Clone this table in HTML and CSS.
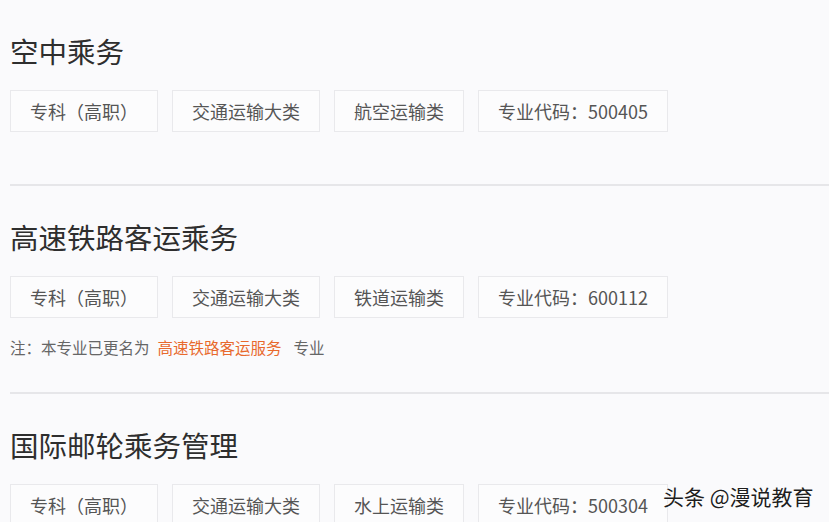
FILE: index.html
```html
<!DOCTYPE html>
<html lang="zh-CN">
<head>
  <meta charset="UTF-8">
  <title>专业介绍</title>
  <link rel="stylesheet" href="styles.css">
</head>
<body>
  <div class="major-list">
    <div class="major">
      <h2 class="major-title">空中乘务</h2>
      <div class="tags">
        <span class="tag">专科（高职）</span>
        <span class="tag">交通运输大类</span>
        <span class="tag">航空运输类</span>
        <span class="tag">专业代码：500405</span>
      </div>
    </div>
    <div class="major">
      <h2 class="major-title">高速铁路客运乘务</h2>
      <div class="tags">
        <span class="tag">专科（高职）</span>
        <span class="tag">交通运输大类</span>
        <span class="tag">铁道运输类</span>
        <span class="tag">专业代码：600112</span>
      </div>
      <p class="note">注：本专业已更名为<a class="note-link" href="#">高速铁路客运服务</a>专业</p>
    </div>
    <div class="major">
      <h2 class="major-title">国际邮轮乘务管理</h2>
      <div class="tags">
        <span class="tag">专科（高职）</span>
        <span class="tag">交通运输大类</span>
        <span class="tag">水上运输类</span>
        <span class="tag">专业代码：500304</span>
      </div>
    </div>
  </div>
  <div class="watermark">头条 @漫说教育</div>
</body>
</html>
```

FILE: styles.css
```css
html, body {
  height: 100%;
}
body {
  margin: 0;
  padding: 0;
  background-color: #fafafc;
  font-family: "Noto Sans CJK SC", "Liberation Sans", sans-serif;
  color: #333;
  overflow: hidden;
  position: relative;
}
.major-list {
  padding-left: 10px;
}
.major {
  padding: 33px 0 34px;
}
.major + .major {
  border-top: 2px solid #e6e6e9;
}
.major-title {
  margin: 0 0 21px;
  font-size: 28.5px;
  line-height: 36px;
  font-weight: 400;
  color: #2e2e2e;
}
.tags {
  display: flex;
  gap: 14px;
  margin-bottom: 18px;
}
.tag {
  display: flex;
  align-items: center;
  height: 40px;
  padding: 0 19px;
  border: 1px solid #e9e9ec;
  background-color: #fcfcfd;
  font-size: 18px;
  color: #555;
  white-space: nowrap;
}
.note {
  margin: 2px 0 0;
  font-size: 15.5px;
  line-height: 22px;
  color: #666;
}
.note-link {
  margin: 0 12px 0 8px;
  color: #e8692d;
  text-decoration: none;
}
.watermark {
  position: absolute;
  left: 663px;
  top: 482px;
  font-size: 21px;
  line-height: 28px;
  color: #1e1e1e;
  text-shadow: 0 0 2px #fff, 0 0 2px #fff;
}
```
